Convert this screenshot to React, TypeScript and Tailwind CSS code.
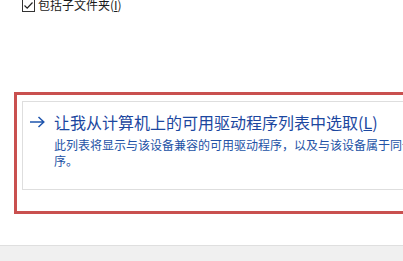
export default function App() {
  return (
    <div className="flex h-[261px] w-[403px] flex-col overflow-hidden bg-white font-['Microsoft_YaHei','Noto_Sans_CJK_SC',sans-serif]">
      {/* top option, scrolled partly out of view */}
      <div className="h-[92px] shrink-0">
        <div className="-mt-[2px] flex items-center gap-[3px] pl-[22px]">
          <svg width="13" height="13" viewBox="0 0 13 13" className="shrink-0">
            <rect x="0.5" y="0.5" width="12" height="12" fill="#fff" stroke="#333" />
            <path d="M2.5 6.5 L5.2 9.2 L10.5 3.5" fill="none" stroke="#222" strokeWidth="1.2" />
          </svg>
          <span className="text-[12px] leading-[14px] text-[#1a1a1a]">
            包括子文件夹(<span className="underline">I</span>)
          </span>
        </div>
      </div>

      {/* highlighted choice */}
      <div className="ml-[14px] h-[122px] w-[420px] shrink-0 border-[3px] border-[#c9504f] pl-[5px] pt-[6px]">
        <div className="h-[89px] border border-[#dedede] pl-[7px] pt-[9px]">
          <div className="flex items-center gap-[9px]">
            <svg width="15" height="12" viewBox="0 0 15 12" className="shrink-0">
              <path d="M0 6 H13.5 M8.5 1 L13.8 6 L8.5 11" fill="none" stroke="#1f55ad" strokeWidth="1.5" />
            </svg>
            <span className="whitespace-nowrap text-[16px] leading-[22px] text-[#1c479f]">
              让我从计算机上的可用驱动程序列表中选取(<span className="underline">L</span>)
            </span>
          </div>
          <div className="mt-[4px] pl-[24px] text-[12px] leading-[16px] text-[#2352a6]">
            <div className="whitespace-nowrap">此列表将显示与该设备兼容的可用驱动程序，以及与该设备属于同一类别的所有驱动程</div>
            <div>序。</div>
          </div>
        </div>
      </div>

      <div className="flex-1" />
      <div className="h-[16px] shrink-0 border-t border-[#dfdfdf] bg-[#f0f0f0]" />
    </div>
  );
}
